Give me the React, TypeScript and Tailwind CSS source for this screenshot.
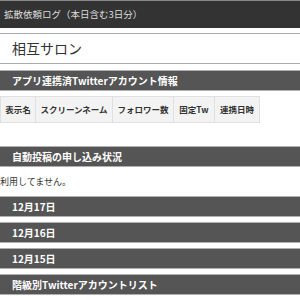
import React from 'react';

const font = { fontFamily: '"Noto Sans CJK JP", "Noto Sans", sans-serif' };

const Bar = ({ label }: { label: string }) => (
  <div className="h-[21px] border-y border-[#b0b0b0] bg-[#555555] flex items-center pl-[12px] text-[10px] font-bold text-white leading-none">
    {label}
  </div>
);

const columns = [
  { label: '表示名', w: 'w-[36px]' },
  { label: 'スクリーンネーム', w: 'w-[78px]' },
  { label: 'フォロワー数', w: 'w-[62px]' },
  { label: '固定Tw', w: 'w-[42px]' },
  { label: '連携日時', w: 'w-[46px]' },
];

const App = () => {
  return (
    <div className="w-[300px] h-[300px] overflow-hidden bg-white" style={font}>
      {/* Header */}
      <div className="h-[28px] bg-[#333333] border-t border-[#888] flex items-center pl-[4px] text-[9.5px] text-[#dddddd]">
        拡散依頼ログ（本日含む3日分）
      </div>

      {/* Name box */}
      <div className="mt-[5px] h-[31px] border-y border-[#aaaaaa] flex items-center pl-[12px] text-[14px] text-[#333]">
        相互サロン
      </div>

      <div className="mt-[6px]">
        <Bar label="アプリ連携済Twitterアカウント情報" />
      </div>

      {/* Table */}
      <div className="mt-[5px] flex">
        {columns.map((c) => (
          <div
            key={c.label}
            className={`${c.w} h-[27px] border border-[#e0e0e0] -ml-px first:ml-0 bg-[#f3f3f3] flex items-center justify-center text-[8.5px] font-bold text-[#333]`}
          >
            {c.label}
          </div>
        ))}
      </div>

      <div className="mt-[23px]">
        <Bar label="自動投稿の申し込み状況" />
      </div>

      <div className="h-[29px] flex items-center text-[9px] text-[#333]">
        利用してません。
      </div>

      <div className="flex flex-col gap-[5px]">
        <Bar label="12月17日" />
        <Bar label="12月16日" />
        <Bar label="12月15日" />
        <Bar label="階級別Twitterアカウントリスト" />
      </div>
    </div>
  );
};

export default App;
